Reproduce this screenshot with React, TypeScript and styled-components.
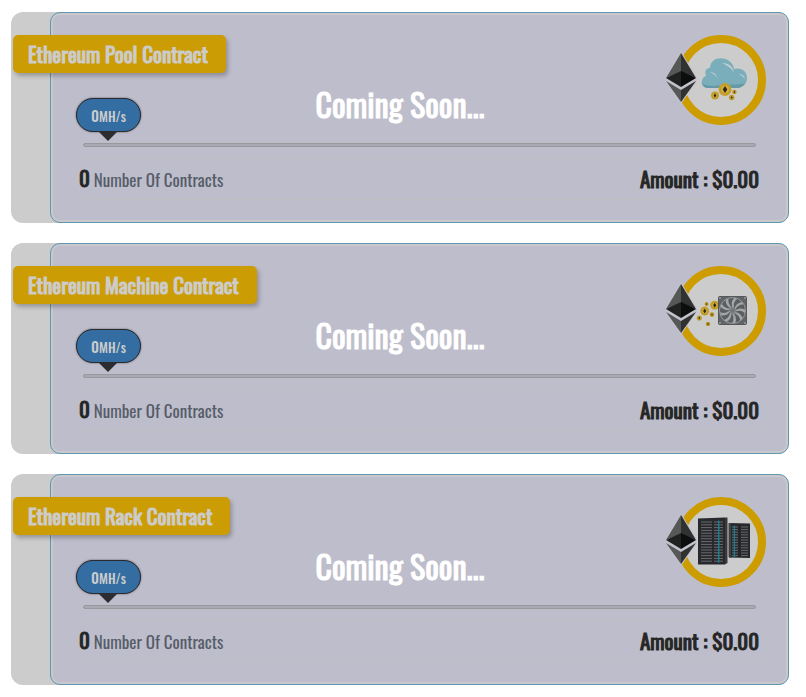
import React from "react";
import styled, { createGlobalStyle } from "styled-components";

const GlobalStyle = createGlobalStyle`
  * { box-sizing: border-box; }
  body {
    margin: 0;
    background: #ffffff;
    font-family: Oswald, "Liberation Sans Narrow", "Roboto Condensed", "Liberation Sans", sans-serif;
    color: #262626;
  }
`;

const List = styled.main`
  display: flex;
  flex-direction: column;
  gap: 20px;
  padding: 12px 17px 12px 11px;
`;

const Card = styled.section`
  position: relative;
  padding-left: 39px;
  border-radius: 12px;
  background: #cccccc;
`;

const Panel = styled.div`
  padding: 22px 22px 22px 24px;
  border: 1px solid #6096b2;
  border-radius: 10px;
  background: #bebdcb;
  box-shadow: inset 0 0 0 2px #c9c9cb;
`;

const Top = styled.div`
  display: flex;
  justify-content: space-between;
  align-items: flex-start;
`;

const Ribbon = styled.h2`
  width: max-content;
  height: 38px;
  margin: 0 0 25px -62px;
  padding: 0 18px 0 15px;
  border-radius: 5px;
  background: #cc9c05;
  box-shadow: 2px 3px 4px rgba(0, 0, 0, 0.25);
  color: #cccccc;
  font-size: 21px;
  font-weight: 400;
  line-height: 38px;
  white-space: nowrap;
  -webkit-text-stroke: 1px currentColor;
`;

const Bubble = styled.output`
  display: flex;
  align-items: center;
  justify-content: center;
  position: relative;
  width: 65px;
  height: 34px;
  margin: 0 0 11px 1px;
  border: 1px solid #292b30;
  border-radius: 17px;
  background: #336da2;
  box-shadow: 0 0 2px rgba(0, 0, 0, 0.6);
  color: #cccccc;
  font-size: 15px;
  font-weight: 500;
  line-height: 20px;

  &::after {
    content: "";
    position: absolute;
    top: 100%;
    left: 50%;
    margin-left: -11px;
    border: 10px solid transparent;
    border-top-color: #2c2c31;
    border-bottom: 0;
  }
`;

const Unit = styled.span`
  font-size: 13px;
`;

const Badge = styled.svg`
  display: block;
  flex: none;
  width: 100px;
  height: 90px;
`;

const Slider = styled.input`
  appearance: none;
  display: block;
  width: calc(100% - 18px);
  height: 4px;
  margin: 0 10px 11px 8px;
  border: 1px solid #98989f;
  border-radius: 2px;
  background: #a9a9b3;

  &::-webkit-slider-thumb {
    appearance: none;
    width: 50px;
    height: 2px;
    background: transparent;
  }
`;

const Summary = styled.div`
  display: flex;
  align-items: center;
  justify-content: space-between;
  height: 42px;
  padding: 0 6px 0 3px;
  border: 1px solid #bebec4;
  border-radius: 10px;
  line-height: 32px;
`;

const Contracts = styled.p`
  margin: 0;
  color: #555c68;
  font-size: 17px;
`;

const Strong = styled.strong`
  color: #262626;
  font-size: 21px;
  font-weight: 400;
  -webkit-text-stroke: 1px currentColor;
`;

const Soon = styled.div`
  position: absolute;
  inset: 0;
  display: flex;
  align-items: center;
  justify-content: center;
  padding-bottom: 28px;
  color: #ffffff;
  font-size: 32px;
  font-weight: 400;
  line-height: 48px;
  -webkit-text-stroke: 1px currentColor;
  pointer-events: none;
`;

type Kind = "pool" | "machine" | "rack";

function Coin({ x, y, r }: { x: number; y: number; r: number }) {
  return (
    <g>
      <circle cx={x} cy={y} r={r} fill="#c9a22b" />
      <circle cx={x} cy={y} r={r * 0.72} fill="#d2ad39" stroke="#a98721" strokeWidth="0.5" />
      <path
        d={`M${x} ${y - r * 0.55}L${x + r * 0.35} ${y}L${x} ${y + r * 0.55}L${x - r * 0.35} ${y}Z`}
        fill="#2e2a1b"
      />
    </g>
  );
}

function Cloud() {
  return (
    <g>
      <path
        d="M42 53C34 53 34 43 40 41C38 35 41 33 44 33C44 20 66 20 68 34C75 32 81 36 81 43C81 49 77 52 71 53Z"
        fill="#7aaebb"
      />
      <path d="M36 48C40 52 51 51 57 50S75 50 79 48C77 52 74 53 71 53H42C39 53 37 51 36 48Z" fill="#6599a9" />
      <path d="M56 28Q66 28 68 37Q63 31 56 28ZM44 37Q50 37 51 43Q49 39 44 37ZM73 39Q78 39 79 44Q77 41 73 39Z" fill="#c1cdd0" />
      <Coin x={59} y={54.5} r={6.5} />
      <Coin x={49} y={60.5} r={4} />
      <Coin x={65.7} y={62.5} r={2.8} />
      <Coin x={68.4} y={57} r={2.2} />
    </g>
  );
}

function Machine() {
  const blades = Array.from({ length: 9 }, (_, i) => i * 40);
  return (
    <g>
      <Coin x={38.7} y={45} r={4.5} />
      <Coin x={48.7} y={39.3} r={4.5} />
      <Coin x={40.6} y={38} r={2} />
      <Coin x={46} y={48.6} r={2.4} />
      <Coin x={33.3} y={52} r={2.6} />
      <Coin x={42} y={58} r={2.3} />
      <rect x="52.5" y="30.5" width="28" height="28" rx="1" fill="#626568" stroke="#55585b" />
      <circle cx="66.5" cy="44.5" r="13" fill="#5b5e61" stroke="#a5a7a9" strokeWidth="0.8" />
      {blades.map((angle) => (
        <path
          key={angle}
          d="M67 42Q64 37 68 32Q70 32 71 33Q67 36 68 42Z"
          fill="#a4a6a7"
          transform={`rotate(${angle} 66.5 44.5)`}
        />
      ))}
      <circle cx="66.5" cy="44.5" r="3" fill="#747779" stroke="#949698" strokeWidth="0.6" />
      {[54, 79].map((x) =>
        [32, 57].map((y) => <circle key={`${x}-${y}`} cx={x} cy={y} r="0.9" fill="#9b9d9f" />)
      )}
    </g>
  );
}

function Rack() {
  const big = Array.from({ length: 15 }, (_, i) => 25 + i * 2.8);
  const small = Array.from({ length: 12 }, (_, i) => 30 + i * 2.6);
  return (
    <g>
      <path d="M32 21.5L59 20.5V67.5H32Z" fill="#28292c" />
      <path d="M59 20.5L61.5 20.5V66L59 67.5Z" fill="#38393c" />
      {big.map((y) => (
        <g key={y}>
          <path d={`M35 ${y}H46M48 ${y}H57`} stroke="#6b6c6e" strokeWidth="1" />
          <path d={`M52.7 ${y - 1.4}V${y + 1.4}`} stroke="#1a8296" strokeWidth="1.5" />
        </g>
      ))}
      <path d="M63 26L84 26.5V61L63 60.5Z" fill="#28292c" />
      <path d="M62.5 26H65V61L62.5 60Z" fill="#404144" />
      {small.map((y) => (
        <g key={y}>
          <path d={`M66 ${y}H72M75 ${y}H82`} stroke="#66686a" strokeWidth="1" />
          <path d={`M68.4 ${y - 1.3}V${y + 1.3}`} stroke="#1a8296" strokeWidth="1.4" />
        </g>
      ))}
      <path d="M73.5 28V60" stroke="#212225" strokeWidth="1.2" />
    </g>
  );
}

function ContractBadge({ kind }: { kind: Kind }) {
  return (
    <Badge viewBox="0 0 100 90" aria-hidden="true">
      <circle cx="55" cy="45" r="41" fill="#cccccc" stroke="#cc9c00" strokeWidth="8" />
      {kind === "pool" && <Cloud />}
      {kind === "machine" && <Machine />}
      {kind === "rack" && <Rack />}
      <path d="M15 16L31 43V46L15 69L-1 46V43Z" fill="#c2c2cb" />
      <path d="M15 18V37L0 43Z" fill="#565858" />
      <path d="M15 18L30 43L15 37Z" fill="#303131" />
      <path d="M0 43L15 36V52Z" fill="#202121" />
      <path d="M15 36L30 43L15 52Z" fill="#0c0d0d" />
      <path d="M0 46L15 55V67Z" fill="#565858" />
      <path d="M15 55L30 46L15 67Z" fill="#303131" />
    </Badge>
  );
}

function ContractCard({ kind, title }: { kind: Kind; title: string }) {
  const sliderId = `${kind}-power`;
  return (
    <Card>
      <Panel>
        <Top>
          <div>
            <Ribbon>{title}</Ribbon>
            <Bubble htmlFor={sliderId}>
              <span>0<Unit>MH/s</Unit></span>
            </Bubble>
          </div>
          <ContractBadge kind={kind} />
        </Top>
        <Slider id={sliderId} type="range" min="0" max="100" defaultValue="0" aria-label={`${title} hash rate`} />
        <Summary>
          <Contracts>
            <Strong>0</Strong> Number Of Contracts
          </Contracts>
          <Strong>Amount : $0.00</Strong>
        </Summary>
      </Panel>
      <Soon>Coming Soon...</Soon>
    </Card>
  );
}

export default function App() {
  return (
    <>
      <GlobalStyle />
      <List>
        <ContractCard kind="pool" title="Ethereum Pool Contract" />
        <ContractCard kind="machine" title="Ethereum Machine Contract" />
        <ContractCard kind="rack" title="Ethereum Rack Contract" />
      </List>
    </>
  );
}
